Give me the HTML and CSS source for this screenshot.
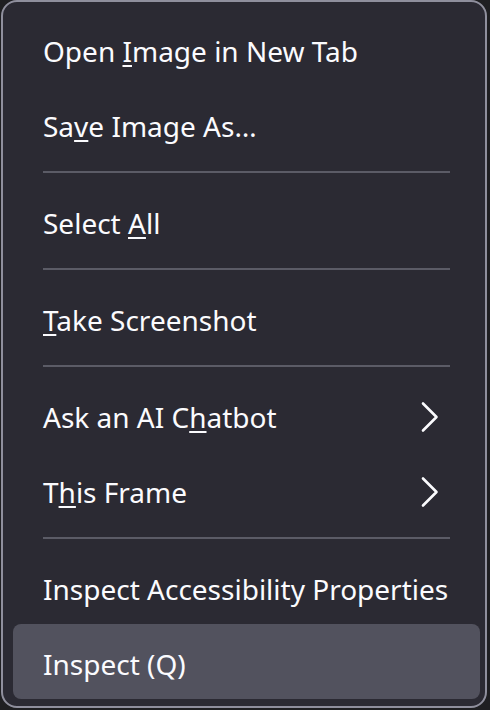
FILE: index.html
```html
<!DOCTYPE html>
<html lang="en">
<head>
<meta charset="utf-8">
<title>Context menu</title>
<link rel="stylesheet" href="styles.css">
</head>
<body>
<div class="menu">
  <div class="item"><span class="label">Open <u>I</u>mage in New Tab</span></div>
  <div class="item"><span class="label">Sa<u>v</u>e Image As…</span></div>
  <div class="sep"></div>
  <div class="item"><span class="label">Select <u>A</u>ll</span></div>
  <div class="sep"></div>
  <div class="item"><span class="label"><u>T</u>ake Screenshot</span></div>
  <div class="sep"></div>
  <div class="item"><span class="label">Ask an AI C<u>h</u>atbot</span>
    <svg class="chev" viewBox="0 0 20 32" width="20" height="32"><path d="M3 2.5 L16.5 16 L3 29.5"/></svg></div>
  <div class="item"><span class="label">T<u>h</u>is Frame</span>
    <svg class="chev" viewBox="0 0 20 32" width="20" height="32"><path d="M3 2.5 L16.5 16 L3 29.5"/></svg></div>
  <div class="sep"></div>
  <div class="item"><span class="label">Inspect Accessibility Properties</span></div>
  <div class="item active"><span class="label">Inspect (Q)</span></div>
</div>
</body>
</html>
```
FILE: styles.css
```css
html, body {
  margin: 0;
  padding: 0;
  background: #1f1f22;
}
body {
  width: 490px;
  height: 710px;
  overflow: hidden;
}
.menu {
  box-sizing: border-box;
  margin-left: 1px;
  width: 486px;
  height: 708px;
  background: #2b2a33;
  border: 2px solid #8f8f9d;
  border-radius: 16px;
  padding: 8.5px 5px 6.5px 10px;
  font-family: "Noto Sans", "Open Sans", sans-serif;
  font-size: 28px;
  color: #fbfbfe;
}
.item {
  box-sizing: border-box;
  height: 75px;
  padding: 5px 40px 0 30px;
  display: flex;
  align-items: center;
  justify-content: space-between;
  border-radius: 8px;
  white-space: nowrap;
}
.item.active {
  background: #52525e;
}
.label u {
  text-decoration-thickness: 2px;
  text-underline-offset: 3px;
}
.chev {
  flex: none;
  fill: none;
  stroke: #fbfbfe;
  stroke-width: 2.6;
  stroke-linecap: round;
  stroke-linejoin: round;
}
.sep {
  height: 2px;
  margin: 10px 30px 10px 30px;
  background: #5b5b66;
}
```
